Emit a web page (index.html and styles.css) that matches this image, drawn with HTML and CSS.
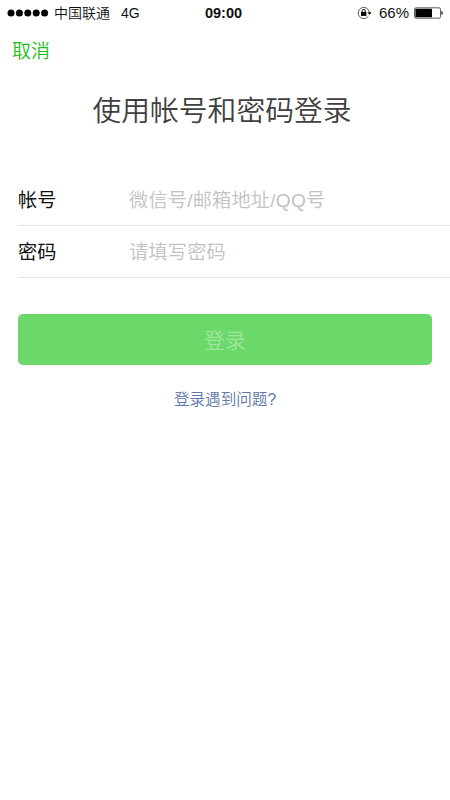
FILE: index.html
```html
<!DOCTYPE html>
<html lang="zh-CN">
<head>
<meta charset="utf-8">
<title>登录</title>
<link rel="stylesheet" href="styles.css">
</head>
<body>
<header class="status">
  <div class="status-left">
    <svg class="signal" width="42" height="8" viewBox="0 0 42 8"><circle cx="4" cy="4" r="3.5"/><circle cx="12.4" cy="4" r="3.5"/><circle cx="20.8" cy="4" r="3.5"/><circle cx="29.2" cy="4" r="3.5"/><circle cx="37.6" cy="4" r="3.5"/></svg>
    <span class="carrier">中国联通</span>
    <span class="network">4G</span>
  </div>
  <time class="clock">09:00</time>
  <div class="status-right">
    <svg class="lock" width="15" height="14" viewBox="0 0 15 14"><path d="M11.4 10.2A5.6 5.6 0 1 1 12.3 6" fill="none" stroke="#444" stroke-width=".9"/><path d="M10.4 6.3h4.2l-2.1 2.6z"/><rect x="4" y="5.9" width="5.4" height="4"/><path d="M5.1 6.2V5a1.6 1.6 0 0 1 3.2 0v1.2" fill="none" stroke="#111"/></svg>
    <span class="percent">66%</span>
    <svg class="battery" width="29" height="12" viewBox="0 0 29 12"><rect x=".5" y=".8" width="26" height="10.4" rx="1.5" fill="none" stroke="#333" stroke-width=".8"/><rect x="1.4" y="1.7" width="16.6" height="8.6" rx=".5"/><path d="M27.5 4q1.3.4 1.3 2t-1.3 2z"/></svg>
  </div>
</header>
<nav class="nav"><a class="cancel">取消</a></nav>
<main>
  <h1 class="title">使用帐号和密码登录</h1>
  <form class="form">
    <div class="row"><label class="label">帐号</label><span class="hint">微信号/邮箱地址/QQ号</span></div>
    <div class="row"><label class="label">密码</label><span class="hint">请填写密码</span></div>
    <button class="login" type="button">登录</button>
  </form>
  <a class="help">登录遇到问题?</a>
</main>
</body>
</html>
```
FILE: styles.css
```css
* { box-sizing: border-box; }
body {
  margin: 0;
  height: 800px;
  overflow: hidden;
  background: #fff;
  color: #111;
  font-family: "Liberation Sans", "Noto Sans CJK SC", sans-serif;
  font-weight: 350;
}
.status {
  display: grid;
  grid-template-columns: 1fr auto 1fr;
  align-items: center;
  height: 25px;
  padding: 0 7px;
  font-size: 14px;
  line-height: 24px;
}
.status-left, .status-right { display: flex; align-items: center; }
.status-right { justify-content: flex-end; }
.carrier { margin-left: 5px; }
.network { margin-left: 11px; }
.clock { font-size: 14.5px; font-weight: 700; margin-right: 3px; }
.percent { margin: 0 5px 0 7px; font-size: 15px; }
.nav { height: 51px; padding: 13px 12px 0; }
.cancel { display: block; color: #1cbd1c; font-size: 19px; line-height: 28px; }
.title {
  margin: 14px 0 0;
  padding-right: 6px;
  height: 83px;
  font-size: 28.8px;
  font-weight: 350;
  line-height: 42px;
  text-align: center;
  color: #404040;
}
.form { padding-left: 18px; }
.row {
  display: flex;
  align-items: center;
  height: 53px;
  padding-bottom: 1px;
  border-bottom: 1px solid #e4e4e4;
  font-size: 19.2px;
}
.row + .row { height: 52px; }
.label { width: 111px; font-weight: 400; }
.hint { color: #c2c2c2; letter-spacing: .2px; }
.login {
  display: block;
  width: 414px;
  height: 51px;
  margin-top: 36px;
  padding: 0 0 2px;
  border: 0;
  border-radius: 5px;
  background: #6bd96a;
  color: #9de69b;
  font: inherit;
  font-size: 21px;
}
.help {
  display: block;
  margin-top: 23px;
  color: #6177a5;
  font-size: 15.6px;
  line-height: 24px;
  text-align: center;
}
```
